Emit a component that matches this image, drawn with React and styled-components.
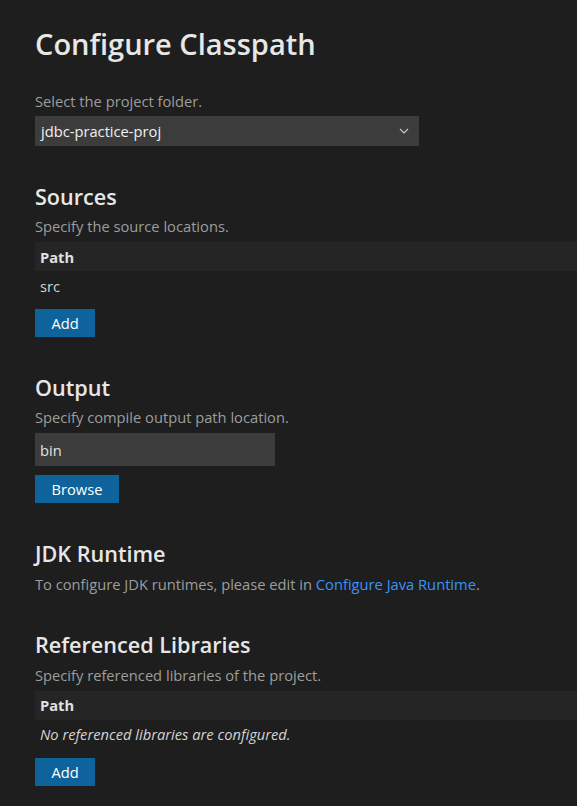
import React from 'react'
import styled, { createGlobalStyle } from 'styled-components'

const GlobalStyle = createGlobalStyle`
    html, body {
        margin: 0;
        padding: 0;
        background: #1e1e1e;
    }
    body {
        font-family: "Open Sans", "Noto Sans", sans-serif;
        color: #cccccc;
    }
`

const App = () => {
    return (
        <Page>
            <GlobalStyle />
            <Title>Configure Classpath</Title>
            <Label>Select the project folder.</Label>
            <Select>
                <span>jdbc-practice-proj</span>
                <svg width="10" height="6" viewBox="0 0 10 6">
                    <polyline points="1,1 5,5 9,1" fill="none" stroke="#c5c5c5" strokeWidth="1.2" />
                </svg>
            </Select>

            <Heading>Sources</Heading>
            <Description>Specify the source locations.</Description>
            <Table>
                <HeaderRow>Path</HeaderRow>
                <Row>src</Row>
            </Table>
            <Button>Add</Button>

            <Heading>Output</Heading>
            <Description>Specify compile output path location.</Description>
            <Input>bin</Input>
            <Button>Browse</Button>

            <Heading>JDK Runtime</Heading>
            <Description>
                To configure JDK runtimes, please edit in <Link>Configure Java Runtime</Link>.
            </Description>

            <Heading>Referenced Libraries</Heading>
            <Description>Specify referenced libraries of the project.</Description>
            <Table>
                <HeaderRow>Path</HeaderRow>
                <Row empty>No referenced libraries are configured.</Row>
            </Table>
            <Button>Add</Button>
        </Page>
    )
}

const Page = styled.div`
    display: flex;
    flex-direction: column;
    align-items: flex-start;
    padding: 25px 0 20px 35px;
    overflow: hidden;
`

const Title = styled.h1`
    margin: 0;
    font-size: 29px;
    line-height: 38px;
    font-weight: 600;
    color: #e7e7e7;
`

const Label = styled.div`
    margin-top: 28px;
    font-size: 14.7px;
    line-height: 21px;
    color: #9d9d9d;
`

const Select = styled.div`
    margin-top: 4px;
    box-sizing: border-box;
    width: 384px;
    height: 30px;
    display: flex;
    align-items: center;
    justify-content: space-between;
    padding: 0 10px 0 6px;
    background: #3c3c3c;
    color: #f0f0f0;
    font-size: 14.7px;
`

const Heading = styled.h2`
    margin: 36.5px 0 0;
    font-size: 21.6px;
    line-height: 28px;
    font-weight: 600;
    color: #e7e7e7;
`

const Description = styled.div`
    margin-top: 5.8px;
    font-size: 14.7px;
    line-height: 21px;
    color: #9d9d9d;
`

const Link = styled.span`
    color: #3794ff;
`

const Table = styled.div`
    margin-top: 4.8px;
    align-self: stretch;
    display: flex;
    flex-direction: column;
`

const HeaderRow = styled.div`
    height: 29px;
    display: flex;
    align-items: center;
    padding-left: 5px;
    background: #252526;
    font-size: 14.7px;
    font-weight: 700;
    color: #e0e0e0;
`

const Row = styled.div`
    height: 29px;
    display: flex;
    align-items: center;
    padding-left: 5px;
    font-size: 14.7px;
    color: #d4d4d4;
    font-style: ${p => (p.empty ? 'italic' : 'normal')};
`

const Input = styled.div`
    margin-top: 5px;
    box-sizing: border-box;
    width: 240px;
    height: 33px;
    display: flex;
    align-items: center;
    padding-left: 5px;
    background: #3c3c3c;
    color: #e0e0e0;
    font-size: 14.7px;
`

const Button = styled.button`
    margin-top: 9px;
    height: 28px;
    padding: 0 16.5px;
    border: none;
    background: #0e639c;
    color: #ffffff;
    font-family: inherit;
    font-size: 14.7px;
`

export default App
